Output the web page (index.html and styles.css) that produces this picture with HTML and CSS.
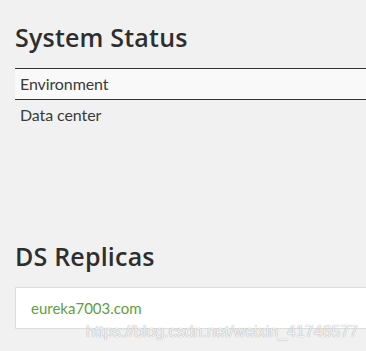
FILE: index.html
```html
<html lang="en">
	<head>
		<meta charset="UTF-8">
		<meta name="viewport" content="width=device-width, initial-scale=1">
		<title>Eureka</title>
		<link rel="stylesheet" href="styles.css">
	</head>
	<body>
		<div class="container">
			<h1>System Status</h1>
			<table class="status">
				<tr class="odd"><td>Environment</td><td></td></tr>
				<tr><td>Data center</td><td></td></tr>
			</table>

			<h1 class="replicas-title">DS Replicas</h1>
			<ul class="replicas">
				<li><a href="#">eureka7003.com</a></li>
			</ul>
		</div>
		<div class="watermark">https://blog.csdn.net/weixin_41746577</div>
	</body>
</html>
```

FILE: styles.css
```css
html {
	overflow: hidden;
}
body {
	margin: 0;
	background: #f1f1f1;
	color: #3a3a3a;
	font-family: "Lato", "Open Sans", sans-serif;
	font-size: 13px;
}
.container {
	width: 1140px;
	padding: 21px 15px 0;
}
h1 {
	margin: 0 0 15px;
	font-family: "Open Sans", sans-serif;
	font-size: 25px;
	font-weight: 600;
	letter-spacing: .2px;
	line-height: 32px;
	color: #2e2e2e;
}
.status {
	width: 100%;
	border-collapse: collapse;
	border-top: 1px solid #333;
}
.status td {
	padding: 6px 5px;
	line-height: 18px;
	letter-spacing: -.1px;
}
.status .odd td {
	background: #f9f9f9;
	border-bottom: 1px solid #333;
}
.replicas-title {
	margin-top: 110px;
}
.replicas {
	list-style: none;
	margin: 0;
	padding: 10px 15px;
	background: #fff;
	border: 1px solid #ddd;
}
.replicas li {
	line-height: 20px;
	font-size: 15px;
}
.replicas a {
	color: #62a03a;
	text-decoration: none;
}
.watermark {
	position: absolute;
	left: 86px;
	top: 323px;
	font-family: "Liberation Sans", sans-serif;
	font-size: 16px;
	color: rgba(255, 255, 255, .9);
	text-shadow: 0 0 1px rgba(0, 0, 0, .45);
}
```
